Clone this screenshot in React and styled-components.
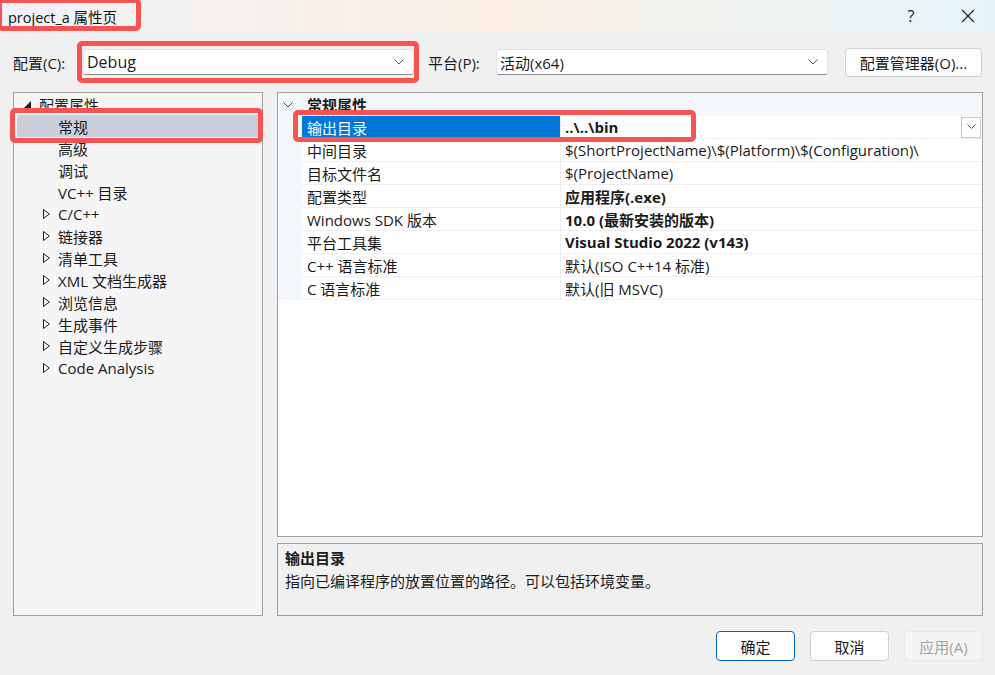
import React from 'react';
import styled, { createGlobalStyle } from 'styled-components';

const GlobalStyle = createGlobalStyle`
  html, body {
    margin: 0;
    padding: 0;
    background: #f0f0f0;
  }
  body {
    font-family: "Segoe UI", "Open Sans", "Noto Sans CJK SC", sans-serif;
    color: #1b1b1b;
  }
`;

const tree = [
  { label: '配置属性', level: 0, toggle: 'open' },
  { label: '常规', level: 1, selected: true },
  { label: '高级', level: 1 },
  { label: '调试', level: 1 },
  { label: 'VC++ 目录', level: 1 },
  { label: 'C/C++', level: 1, toggle: 'closed' },
  { label: '链接器', level: 1, toggle: 'closed' },
  { label: '清单工具', level: 1, toggle: 'closed' },
  { label: 'XML 文档生成器', level: 1, toggle: 'closed' },
  { label: '浏览信息', level: 1, toggle: 'closed' },
  { label: '生成事件', level: 1, toggle: 'closed' },
  { label: '自定义生成步骤', level: 1, toggle: 'closed' },
  { label: 'Code Analysis', level: 1, toggle: 'closed' },
];

const props = [
  { name: '输出目录', value: '..\\..\\bin', bold: true, selected: true },
  { name: '中间目录', value: '$(ShortProjectName)\\$(Platform)\\$(Configuration)\\' },
  { name: '目标文件名', value: '$(ProjectName)' },
  { name: '配置类型', value: '应用程序(.exe)', bold: true },
  { name: 'Windows SDK 版本', value: '10.0 (最新安装的版本)', bold: true },
  { name: '平台工具集', value: 'Visual Studio 2022 (v143)', bold: true },
  { name: 'C++ 语言标准', value: '默认(ISO C++14 标准)' },
  { name: 'C 语言标准', value: '默认(旧 MSVC)' },
];

function Chevron({ size = 10, color = '#555' }) {
  return (
    <svg width={size} height={size * 0.6} viewBox="0 0 10 6" fill="none">
      <polyline points="0.5,0.5 5,5 9.5,0.5" stroke={color} strokeWidth="1" />
    </svg>
  );
}

function OpenArrow() {
  return (
    <svg width="7" height="7" viewBox="0 0 7 7">
      <polygon points="7,0 7,7 0,7" fill="#1b1b1b" />
    </svg>
  );
}

function ClosedArrow() {
  return (
    <svg width="7" height="10" viewBox="0 0 7 10">
      <polygon points="0.5,0.5 6.3,5 0.5,9.5" fill="none" stroke="#1b1b1b" strokeWidth="1" />
    </svg>
  );
}

function App() {
  return (
    <>
      <GlobalStyle />
      <Window>
        <TitleBar>
          <Callout style={{ top: -2, left: -3, width: 144, height: 33 }} />
          <Title>project_a 属性页</Title>
          <TitleControls>
            <TitleButton>?</TitleButton>
            <TitleButton>
              <svg width="14" height="14" viewBox="0 0 14 14">
                <path d="M1 1 L13 13 M13 1 L1 13" stroke="#1b1b1b" strokeWidth="1.1" />
              </svg>
            </TitleButton>
          </TitleControls>
        </TitleBar>

        <Toolbar>
          <Label $width={70}>配置(C):</Label>
          <Combo $width={331}>
            <Callout style={{ inset: '-9px -6px -9px -7px' }} />
            <ComboText $large>Debug</ComboText>
            <Chevron />
          </Combo>
          <Label $width={68}>平台(P):</Label>
          <Combo $width={332}>
            <ComboText>活动(x64)</ComboText>
            <Chevron />
          </Combo>
          <ToolButton>配置管理器(O)...</ToolButton>
        </Toolbar>

        <Main>
          <TreePanel>
            {tree.map((item) => (
              <TreeRow key={item.label} $level={item.level} $selected={item.selected}>
                {item.selected && <Callout style={{ inset: '-7px -5px -6px -7px' }} />}
                <Toggle>
                  {item.toggle === 'open' && <OpenArrow />}
                  {item.toggle === 'closed' && <ClosedArrow />}
                </Toggle>
                {item.label}
              </TreeRow>
            ))}
          </TreePanel>

          <RightColumn>
            <Grid>
              <GroupHeader>
                <Gutter $header>
                  <Chevron size={10} color="#333" />
                </Gutter>
                <GroupTitle>常规属性</GroupTitle>
              </GroupHeader>
              {props.map((p) => (
                <PropRow key={p.name}>
                  {p.selected && <Callout style={{ top: -6, left: 15, width: 403, height: 32 }} />}
                  <Gutter />
                  <NameCell $selected={p.selected}>{p.name}</NameCell>
                  <ValueCell $bold={p.bold}>
                    {p.value}
                    {p.selected && (
                      <DropButton>
                        <Chevron size={9} color="#444" />
                      </DropButton>
                    )}
                  </ValueCell>
                </PropRow>
              ))}
            </Grid>
            <Description>
              <DescTitle>输出目录</DescTitle>
              <DescText>指向已编译程序的放置位置的路径。可以包括环境变量。</DescText>
            </Description>
          </RightColumn>
        </Main>

        <Footer>
          <DialogButton $primary>确定</DialogButton>
          <DialogButton>取消</DialogButton>
          <DialogButton $disabled>应用(A)</DialogButton>
        </Footer>
      </Window>
    </>
  );
}

const Window = styled.div`
  width: 995px;
  height: 675px;
  background: #f0f0f0;
  display: flex;
  flex-direction: column;
  overflow: hidden;
`;

const Callout = styled.span`
  position: absolute;
  box-sizing: border-box;
  border: 5px solid #f65353;
  border-radius: 5px;
  pointer-events: none;
  z-index: 2;
`;

const TitleBar = styled.div`
  position: relative;
  height: 32px;
  display: flex;
  align-items: center;
  padding-left: 8px;
  background: linear-gradient(90deg, #eef2f6 0%, #f7f2ee 25%, #fcf0e5 50%, #f1f3f0 72%, #e6f4f9 100%);
`;

const Title = styled.span`
  font-size: 14.5px;
  color: #111;
`;

const TitleControls = styled.div`
  margin-left: auto;
  display: flex;
  gap: 17px;
  padding-right: 7px;
`;

const TitleButton = styled.div`
  width: 40px;
  height: 32px;
  display: flex;
  align-items: center;
  justify-content: center;
  font-size: 16px;
  color: #1b1b1b;
`;

const Toolbar = styled.div`
  height: 60px;
  display: flex;
  align-items: center;
  padding: 0 13px;
`;

const Label = styled.span`
  width: ${(p) => p.$width}px;
  flex-shrink: 0;
  font-size: 15px;
  white-space: nowrap;
`;

const Combo = styled.div`
  position: relative;
  width: ${(p) => p.$width}px;
  flex-shrink: 0;
  height: 26px;
  box-sizing: border-box;
  background: #fff;
  border: 1px solid #e3e3e3;
  border-bottom-color: #8d8d8d;
  border-radius: 3px;
  display: flex;
  align-items: center;
  padding: 0 9px 0 3px;
  margin-right: 14px;
`;

const ComboText = styled.span`
  flex: 1;
  font-size: ${(p) => (p.$large ? '16px' : '15px')};
`;

const ToolButton = styled.button`
  margin-left: 3px;
  width: 137px;
  height: 29px;
  background: #fdfdfd;
  border: 1px solid #d0d0d0;
  border-radius: 4px;
  font-family: inherit;
  font-size: 15px;
  color: #1b1b1b;
  padding: 0;
`;

const Main = styled.div`
  height: 524px;
  display: flex;
  gap: 14px;
  padding: 0 12px 0 13px;
`;

const TreePanel = styled.div`
  width: 250px;
  box-sizing: border-box;
  border: 1px solid #a0a0a0;
  background: #f5f5f5;
`;

const TreeRow = styled.div`
  position: relative;
  height: 22px;
  margin: 0 4px 0 3px;
  padding-left: ${(p) => 7 + p.$level * 19}px;
  display: flex;
  align-items: center;
  font-size: 15px;
  background: ${(p) => (p.$selected ? '#cccedb' : 'transparent')};
`;

const Toggle = styled.span`
  width: 15px;
  display: flex;
  align-items: center;
`;

const RightColumn = styled.div`
  flex: 1;
  display: flex;
  flex-direction: column;
  gap: 6px;
`;

const Grid = styled.div`
  flex: 1;
  box-sizing: border-box;
  border: 1px solid #a0a0a0;
  background: #fff;
`;

const GroupHeader = styled.div`
  height: 23px;
  display: flex;
  align-items: center;
  background: #f3f6fa;
`;

const Gutter = styled.div`
  width: 24px;
  align-self: stretch;
  display: flex;
  align-items: center;
  justify-content: center;
  background: #f3f6fa;
  padding-right: ${(p) => (p.$header ? '4px' : '0')};
  box-sizing: border-box;
`;

const GroupTitle = styled.span`
  margin-left: 5px;
  font-size: 15px;
  font-weight: 700;
`;

const PropRow = styled.div`
  position: relative;
  height: 23px;
  display: grid;
  grid-template-columns: 24px 259px 1fr;
`;

const NameCell = styled.div`
  display: flex;
  align-items: center;
  padding-left: 5px;
  font-size: 15px;
  border-bottom: 1px solid #eeeeee;
  border-right: 1px solid #eeeeee;
  background: ${(p) => (p.$selected ? '#0078d7' : 'transparent')};
  color: ${(p) => (p.$selected ? '#fff' : 'inherit')};
`;

const ValueCell = styled.div`
  display: flex;
  align-items: center;
  padding-left: 4px;
  font-size: 15px;
  font-weight: ${(p) => (p.$bold ? 700 : 400)};
  border-bottom: 1px solid #eeeeee;
  white-space: nowrap;
`;

const DropButton = styled.span`
  margin-left: auto;
  margin-right: 1px;
  width: 20px;
  height: 21px;
  box-sizing: border-box;
  border: 1px solid #c8c8c8;
  background: #fff;
  display: flex;
  align-items: center;
  justify-content: center;
`;

const Description = styled.div`
  height: 73px;
  box-sizing: border-box;
  border: 1px solid #a0a0a0;
  background: #f0f0f0;
  padding: 3px 7px;
`;

const DescTitle = styled.div`
  font-size: 15px;
  font-weight: 700;
  line-height: 22px;
`;

const DescText = styled.div`
  font-size: 15px;
  line-height: 24px;
`;

const Footer = styled.div`
  display: flex;
  justify-content: flex-end;
  gap: 15px;
  padding: 15px 12px 0 0;
`;

const DialogButton = styled.button`
  width: 79px;
  height: 30px;
  border-radius: 4px;
  font-family: inherit;
  font-size: 15px;
  padding: 0;
  background: ${(p) => (p.$disabled ? '#f5f5f5' : '#fdfdfd')};
  color: ${(p) => (p.$disabled ? '#a0a0a0' : '#1b1b1b')};
  border: 1px solid
    ${(p) => (p.$primary ? '#0067c0' : p.$disabled ? '#e8e8e8' : '#d0d0d0')};
`;

export default App;
